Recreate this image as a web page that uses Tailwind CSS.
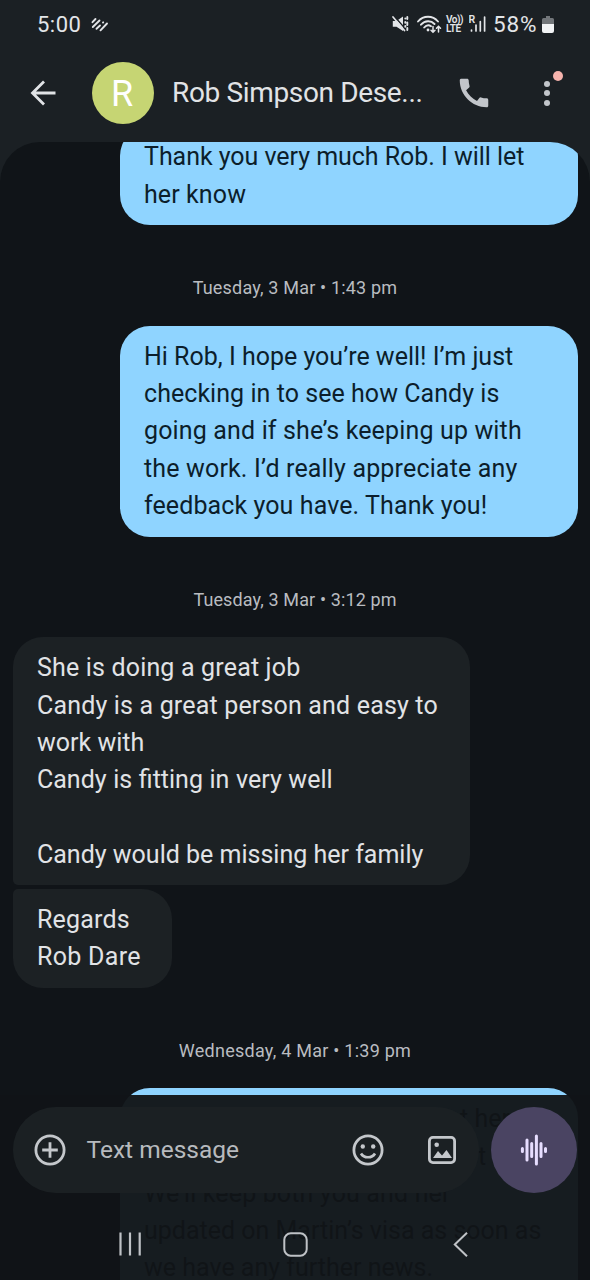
<!DOCTYPE html>
<html lang="en">
<head>
<meta charset="utf-8">
<title>Messages</title>
<script src="https://cdn.jsdelivr.net/npm/@tailwindcss/browser@4"></script>
</head>
<body class="bg-[#1b2024]">
<div class="relative flex h-[1280px] w-[590px] flex-col overflow-hidden bg-[#1b2024] font-[Roboto,sans-serif] text-[#e1e3e6]">

  <!-- Status bar -->
  <div class="flex h-12 shrink-0 items-center pl-[37px] text-[#e3e5e8]">
    <span class="w-[54px] text-[22px] tracking-[0.5px]">5:00</span>
    <svg class="mt-px h-[16px] w-[18px]" viewBox="0 0 18 16" fill="none" stroke="currentColor" stroke-width="1.900" stroke-linecap="round">
      <path d="M1.500 5.200 4.500 2M1.800 10 8.500 3.500M5.500 11.800 9 8.500M12 5.500l.2-.2M9.500 13.300 16 6.500"/>
    </svg>
    <div class="ml-auto flex items-center pr-[36px]">
      <svg class="mr-[8px] h-[18px] w-[17px]" viewBox="0 0 17 18" fill="none" stroke="currentColor" stroke-linecap="round">
        <path d="M.8 6H4.500L11 1.500V16L4.500 11.800H.8Z" fill="currentColor" stroke="none"/>
        <path d="M2.500 1.500 13 13.500" stroke="#1b2024" stroke-width="1.400"/>
        <path d="M1 2 12.500 15.500" stroke-width="1.700"/>
        <path d="M13.300 3.500v.1M15.300 2v2M13.300 7v.8M15.300 7.500v2.500M13.300 11v.8M15.300 13v2" stroke-width="1.900"/>
      </svg>
      <svg class="mr-[4px] h-[19px] w-[25px]" viewBox="0 0 25 19" fill="none" stroke="currentColor" stroke-width="1.900" stroke-linecap="round">
        <path d="M1 6.500C6.500.2 15.500.2 21 6.500M4 9.700C8 5.300 14 5.300 17.500 9M7.200 12.500C9.300 10 12 9.800 14 11.200"/>
        <circle cx="11" cy="15" r="1.400" fill="currentColor" stroke="none"/>
        <path d="M16 11.500v5.500M14 15.200l2 2 2-2M21.500 17v-5.500M19.500 13.300l2-2 2 2" stroke-width="1.500"/>
      </svg>
      <div class="mr-[6px] flex w-[17px] flex-col items-start text-[10px] leading-[9px] font-semibold">
        <span class="tracking-[-0.5px]">Vo))</span>
        <span class="tracking-[-0.5px]">LTE</span>
      </div>
      <svg class="mr-[7px] h-[18px] w-[17px]" viewBox="0 0 17 18">
        <text x="-.5" y="8" font-size="10.500" font-weight="600" fill="currentColor" class="font-[Roboto]">R</text>
        <path d="M2.500 15v1M7 10v6M11.300 6.500V16M15.600 2V16" stroke="currentColor" stroke-width="1.700" stroke-linecap="round"/>
      </svg>
      <span class="mt-px w-[49px] text-[22.500px] tracking-[0.9px]">58%</span>
      <svg class="mt-px h-[17px] w-[12px]" viewBox="0 0 12 17">
        <path d="M4 0h4v2h2.500A1.500 1.500 0 0 1 12 3.500V8H0V3.500A1.500 1.500 0 0 1 1.500 2H4Z" fill="#72767a"/>
        <path d="M0 8h12v7a2 2 0 0 1-2 2H2a2 2 0 0 1-2-2Z" fill="#f1f3f5"/>
      </svg>
    </div>
  </div>

  <!-- Conversation header -->
  <header class="flex h-[94px] shrink-0 items-center pb-1 pl-[30px]">
    <svg class="h-[26px] w-[26px]" viewBox="0 0 26 26" fill="none" stroke="#e1e3e6" stroke-width="2.800">
      <path d="M25.500 13H3M14 1.500 2.500 13 14 24.500"/>
    </svg>
    <div class="ml-[36px] flex h-[62px] w-[62px] items-center justify-center rounded-full bg-[#c6d573] pr-[2px] pt-px text-[36px] text-white">R</div>
    <h1 class="ml-[18px] w-[286px] text-[28px] leading-[36px] font-normal tracking-[-0.35px]">Rob Simpson Dese...</h1>
    <svg class="h-[38px] w-[38px] -translate-x-[3px]" viewBox="0 0 24 24" fill="#c2c5ca">
      <path d="M20.010 15.380c-1.230 0-2.420-.2-3.530-.56a.977.977 0 0 0-1.010.24l-1.570 1.970c-2.830-1.350-5.480-3.900-6.890-6.830l1.950-1.660c.27-.28.35-.67.24-1.020-.37-1.110-.56-2.300-.56-3.530 0-.54-.45-.99-.99-.99H4.190C3.650 3 3 3.240 3 3.990 3 13.280 10.730 21 20.010 21c.71 0 .99-.63.99-1.180v-3.450c0-.54-.45-.99-.99-.99z"/>
    </svg>
    <div class="relative ml-[48px] flex flex-col gap-[3.500px]">
      <i class="h-[6px] w-[6px] rounded-full bg-[#c2c5ca]"></i>
      <i class="h-[6px] w-[6px] rounded-full bg-[#c2c5ca]"></i>
      <i class="h-[6px] w-[6px] rounded-full bg-[#c2c5ca]"></i>
      <i class="absolute -top-[10px] left-[9px] h-[10px] w-[10px] rounded-full bg-[#f6b3ad]"></i>
    </div>
  </header>

  <!-- Messages -->
  <main class="flex-1 overflow-hidden rounded-t-[40px] bg-[#101418] text-[25px] leading-[37.250px]">
    <div class="-mt-[16.250px] flex flex-col px-[12.500px]">
      <div class="h-[99.250px] w-[458px] self-end rounded-[30px] bg-[#8fd4ff] px-[24.500px] py-[12.600px] whitespace-nowrap text-[#0c1e2b]">
        <p class="tracking-[-0.04px]">Thank you very much Rob. I will let</p>
        <p class="tracking-[0.1px]">her know</p>
      </div>
      <div class="flex h-[100.500px] items-start justify-center pt-[50px] text-[18px] leading-[25px] tracking-[0.18px] text-[#b9bcc0]">Tuesday, 3 Mar • 1:43 pm</div>
      <div class="h-[211px] w-[458px] self-end rounded-[30px] bg-[#8fd4ff] px-[24.500px] py-[12.400px] whitespace-nowrap text-[#0c1e2b]">
        <p>Hi Rob, I hope you’re well! I’m just</p>
        <p class="tracking-[0.05px]">checking in to see how Candy is</p>
        <p class="tracking-[0.15px]">going and if she’s keeping up with</p>
        <p class="tracking-[0.16px]">the work. I’d really appreciate any</p>
        <p class="tracking-[0.1px]">feedback you have. Thank you!</p>
      </div>
      <div class="flex h-[100.500px] items-start justify-center pt-[50px] text-[18px] leading-[25px] tracking-[0.12px] text-[#b9bcc0]">Tuesday, 3 Mar • 3:12 pm</div>
      <div class="h-[247.500px] w-[457.500px] rounded-[30px] rounded-bl-[5px] bg-[#1c2124] px-[24.500px] py-[12.400px] whitespace-nowrap">
        <p class="tracking-[0.17px]">She is doing a great job</p>
        <p class="tracking-[0.17px]">Candy is a great person and easy to</p>
        <p>work with</p>
        <p class="[word-spacing:0.4px]">Candy is fitting in very well</p>
        <p class="h-[37.250px]"></p>
        <p>Candy would be missing her family</p>
      </div>
      <div class="mt-[4px] h-[99.500px] w-[159.500px] rounded-[30px] rounded-tl-[5px] bg-[#1c2124] px-[24.500px] py-[12.400px] whitespace-nowrap">
        <p class="tracking-[0.2px]">Regards</p>
        <p class="tracking-[0.3px]">Rob Dare</p>
      </div>
      <div class="flex h-[100px] items-start justify-center pt-[50px] text-[18px] leading-[25px] tracking-[0.25px] text-[#b9bcc0]">Wednesday, 4 Mar • 1:39 pm</div>
      <div class="h-[240px] w-[458px] self-end rounded-[30px] bg-[#8fd4ff] px-[24.500px] py-[12.400px] whitespace-nowrap text-[#0c1e2b]">
        <p class="pl-[316px]">t her</p>
        <p class="pl-[334px]">t</p>
        <p class="tracking-[0.15px]">We’ll keep both you and her</p>
        <p>updated on Martin’s visa as soon as</p>
        <p>we have any further news.</p>
      </div>
    </div>
  </main>

  <!-- Composer and navigation, over the message list -->
  <footer class="absolute inset-x-0 bottom-0 flex h-[185.500px] flex-col bg-[#111417]/96 pt-[12.500px]">
    <div class="flex items-center pl-[12.500px]">
      <div class="flex h-[86px] w-[466px] items-center rounded-full bg-[#1c2124]/98 pl-[21.500px] text-[#c4c7cb]">
        <svg class="h-[32px] w-[32px]" viewBox="0 0 32 32" fill="none" stroke="currentColor" stroke-width="2.800">
          <circle cx="16" cy="16" r="14.100"/><path d="M16 8.200v15.600M8.200 16h15.600"/>
        </svg>
        <span class="ml-[20.500px] w-[265px] text-[24.500px] leading-[36px] text-[#b7babe]">Text message</span>
        <svg class="h-[32px] w-[32px]" viewBox="0 0 32 32" fill="none" stroke="currentColor" stroke-width="2.800">
          <circle cx="16" cy="16" r="14.100"/>
          <path d="M9 19.500c2.800 5 11.200 5 14 0" stroke-width="2.600"/>
          <g fill="currentColor" stroke="none"><circle cx="10.800" cy="12.500" r="2.200"/><circle cx="21.200" cy="12.500" r="2.200"/></g>
        </svg>
        <svg class="ml-[43px] h-[30px] w-[30px]" viewBox="0 0 30 30" fill="none" stroke="currentColor" stroke-width="2.800">
          <rect x="2.400" y="2.400" width="25.200" height="25.200" rx="3.500"/>
          <g fill="currentColor" stroke="none"><circle cx="9.700" cy="9.700" r="2.300"/><path d="M6 23 11 16l4 4.500L19.500 15 25 23Z"/></g>
        </svg>
      </div>
      <div class="ml-[12.500px] flex h-[86px] w-[86px] items-center justify-center rounded-full bg-[#4a4462]">
        <svg class="-ml-px h-[32px] w-[28px]" viewBox="0 0 28 32" stroke="#e7deff" stroke-width="3" stroke-linecap="round">
          <path d="M2.400 14.500v3M7 6v20M11.700 9.500v13M16.400 2v28M21 9.500v13M25.500 14.500v3"/>
        </svg>
      </div>
    </div>
    <div class="mt-[38.500px] flex items-center pl-[118px] text-[#bfc2c6]">
      <svg class="h-[24px] w-[24px]" viewBox="0 0 24 24" stroke="currentColor" stroke-width="2.200"><path d="M2.500.5v23M12 .5v23M21.700.5v23"/></svg>
      <svg class="ml-[140.500px] h-[25px] w-[25px]" viewBox="0 0 25 25" fill="none" stroke="currentColor" stroke-width="2"><rect x="1.300" y="1.300" width="22.400" height="22.400" rx="6.500"/></svg>
      <svg class="ml-[145px] h-[25px] w-[15px]" viewBox="0 0 15 25" fill="none" stroke="currentColor" stroke-width="2"><path d="M14 .7 1.800 12.500 14 24.300"/></svg>
    </div>
  </footer>
</div>
</body>
</html>
